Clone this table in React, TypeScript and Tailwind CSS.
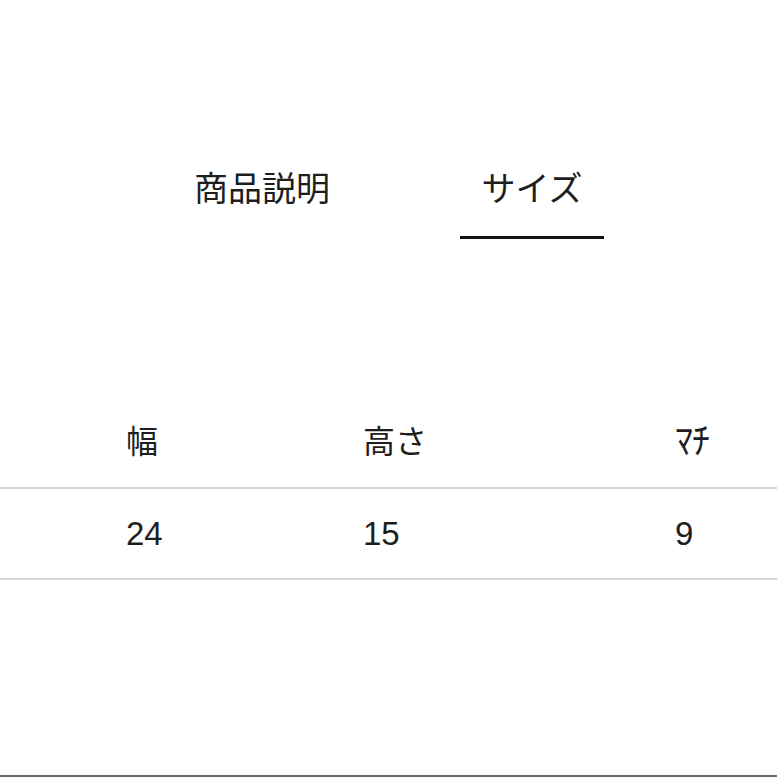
export default function App() {
  const jp = { fontFamily: '"Liberation Sans", "Noto Sans CJK JP", sans-serif' };
  return (
    <div className="w-[777px] h-[777px] bg-white overflow-hidden flex flex-col text-[#1e1e1e]" style={jp}>
      <div className="h-[157px]" />
      <div className="flex h-[82px]">
        <div className="w-[194px]" />
        <div className="w-[266px] flex flex-col">
          <div className="text-[34px] leading-[64px]">商品説明</div>
        </div>
        <div className="w-[144px] flex flex-col items-center justify-between">
          <div className="text-[34px] leading-[64px]">サイズ</div>
          <div className="w-full h-[3px] bg-[#111]" />
        </div>
      </div>
      <div className="h-[170px]" />
      <div className="flex h-[78px] items-center pb-[12px] text-[32px]">
        <div className="w-[126px]" />
        <div className="w-[237px]">幅</div>
        <div className="w-[312px]">高さ</div>
        <div className="text-[36px] tracking-[-1px]">ﾏﾁ</div>
      </div>
      <div className="h-[2px] bg-[#d4d4d4]" />
      <div className="flex h-[89px] items-center text-[33px]">
        <div className="w-[126px]" />
        <div className="w-[237px]">24</div>
        <div className="w-[312px]">15</div>
        <div>9</div>
      </div>
      <div className="h-[2px] bg-[#d4d4d4]" />
      <div className="flex-1" />
      <div className="h-[2px] bg-[#6a6a6a]" />
    </div>
  );
}
